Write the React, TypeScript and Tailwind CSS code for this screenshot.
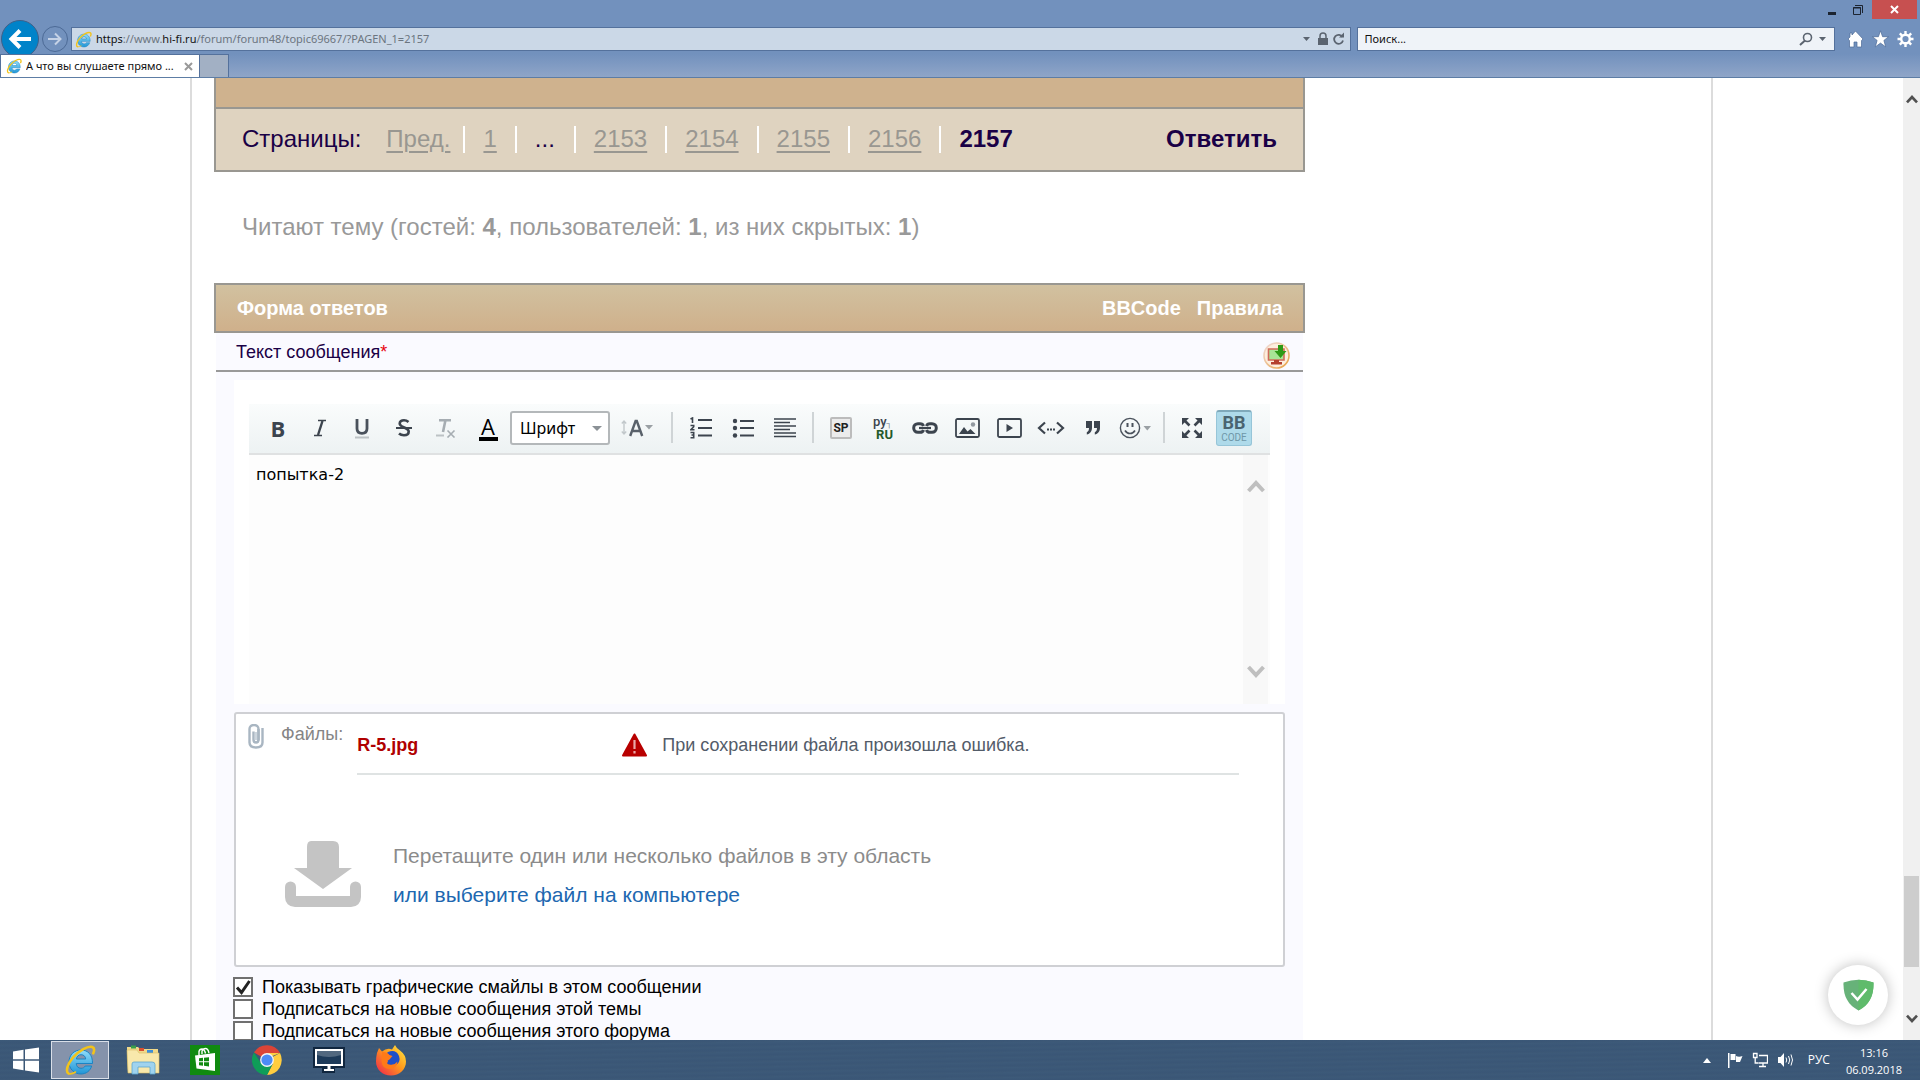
import React from "react";
import type { ReactNode } from "react";

const pages = ["2153", "2154", "2155", "2156"];

function IELogo({ className }: { className: string }) {
  return (
    <svg className={className} viewBox="0 0 32 32" aria-hidden="true">
      <defs>
        <linearGradient id="ieBlue" x1="0" y1="0" x2="0" y2="1">
          <stop offset="0" stopColor="#8fdcfa" />
          <stop offset="1" stopColor="#2196d6" />
        </linearGradient>
      </defs>
      <path
        d="M28.500 19.500H12.200c.2 3 2 4.800 4.800 4.800 2 0 3.400-.8 4.200-2.300h6.500C26.200 26.800 22.200 30 17 30 10.200 30 5 25 5 18S10 6 17 6s11.800 5 11.500 13.500zM12.400 15h9.300c-.3-2.700-2-4.300-4.600-4.300-2.500 0-4.300 1.600-4.700 4.300z"
        fill="url(#ieBlue)"
        stroke="#1b84c4"
        strokeWidth="1"
      />
      <path
        d="M4.500 29.500C1.500 27.500 3 20.500 9 13.500S24 1.500 28.300 3c2.200 1 2.200 3.500 1 6.300"
        fill="none"
        stroke="#f2c31b"
        strokeWidth="2.600"
        strokeLinecap="round"
      />
      <path d="M4.500 29.500c2 .9 4.500 0 7-1.500" fill="none" stroke="#f2c31b" strokeWidth="1.600" strokeLinecap="round" />
    </svg>
  );
}

function BrowserChrome() {
  return (
    <header className="flex h-[78px] shrink-0 flex-col border-b border-[#5d7da5] bg-linear-to-b from-[#7291bd] from-70% to-[#8fa5c8] font-['Noto_Sans',sans-serif] text-[#111]">
      <div className="flex h-5 shrink-0 items-start justify-end pr-[3px]">
        <button aria-label="Свернуть" className="flex h-[19px] w-6 items-center justify-center">
          <svg width="10" height="12" viewBox="0 0 10 12"><path d="M1 8h8v3H1z" fill="#1c2430" /></svg>
        </button>
        <button aria-label="Восстановить" className="flex h-[19px] w-[28px] items-center justify-center">
          <svg width="12" height="12" viewBox="0 0 12 12" fill="none" stroke="#1c2430">
            <path d="M1.500 3.500h7v7h-7zM1 4h8M3 1.500h7.500V9" />
          </svg>
        </button>
        <button aria-label="Закрыть" className="flex h-[19px] w-[45px] items-center justify-center bg-[#c75050]">
          <svg width="9" height="9" viewBox="0 0 9 9"><path d="M1 1l7 7M8 1L1 8" stroke="#fff" strokeWidth="2" /></svg>
        </button>
      </div>
      <div className="flex h-[34px] shrink-0 items-center pt-1 pr-1.5">
        <button aria-label="Назад" className="z-10 ml-px flex size-[38px] shrink-0 items-center justify-center rounded-full border border-[#3f6089] bg-[#0083c9]">
          <svg width="24" height="20" viewBox="0 0 24 20" fill="none" stroke="#fff" strokeWidth="4">
            <path d="M3 10h20M12 1.500L3.500 10l8.500 8.500" />
          </svg>
        </button>
        <button aria-label="Вперёд" className="ml-[3px] flex size-[26px] shrink-0 items-center justify-center rounded-full border border-[#4c6a96]">
          <svg width="16" height="14" viewBox="0 0 16 14" fill="none" stroke="#c5d2e6" strokeWidth="2">
            <path d="M1 7h13M8 1.500L13.500 7 8 12.500" />
          </svg>
        </button>
        <div className="ml-[3px] flex h-6 min-w-0 flex-1 items-center border border-[#54719c] bg-[#cbd8e7] pr-1 pl-[3px]">
          <IELogo className="mr-1 size-[17px] shrink-0" />
          <div className="min-w-0 flex-1 truncate text-[11px] leading-5 text-[#6c7580]">
            <span className="text-[#111]">https</span>://www.<span className="text-[#111]">hi-fi.ru</span>/forum/forum48/topic69667/?PAGEN_1=2157
          </div>
          <button aria-label="Журнал адресов" className="flex w-4 justify-center">
            <svg width="7" height="4" viewBox="0 0 7 4"><path d="M0 0h7L3.500 4z" fill="#5b6470" /></svg>
          </button>
          <svg width="16" height="16" viewBox="0 0 16 16" aria-hidden="true">
            <path d="M3 7h10v7H3z" fill="#5b6470" />
            <path d="M5 7V5a3 3 0 0 1 6 0v2" fill="none" stroke="#5b6470" strokeWidth="1.500" />
          </svg>
          <button aria-label="Обновить">
            <svg width="15" height="15" viewBox="0 0 15 15">
              <path d="M11.500 5A4.500 4.500 0 1 0 12 8.500" fill="none" stroke="#5b6470" strokeWidth="1.800" />
              <path d="M8 5.500h5v-5z" fill="#5b6470" />
            </svg>
          </button>
        </div>
        <div className="ml-1.5 flex h-6 w-1/4 items-center border border-[#54719c] bg-[#eff3f8] pr-2 pl-[7px]">
          <input aria-label="Поиск" placeholder="Поиск..." className="min-w-0 flex-1 bg-transparent text-[11px] leading-5 outline-none placeholder:text-[#111]" />
          <button aria-label="Найти" className="flex items-center gap-1.5">
            <svg width="14" height="14" viewBox="0 0 14 14" fill="none" stroke="#5b6470">
              <circle cx="8.500" cy="5.500" r="4" strokeWidth="1.600" />
              <path d="M6 8.500L1 13" strokeWidth="2" />
            </svg>
            <svg width="7" height="4" viewBox="0 0 7 4"><path d="M0 0h7L3.500 4z" fill="#5b6470" /></svg>
          </button>
        </div>
        <div className="ml-3 flex shrink-0 gap-2">
          <button aria-label="Домой">
            <svg width="17" height="18" viewBox="0 0 17 18">
              <path d="M8.500 1L16 9l-1.500 1.500V17H10v-5H7v5H2.500v-6.500L1 9l2-2V3h2v2z" fill="#fff" stroke="#4c6a96" strokeWidth=".7" />
            </svg>
          </button>
          <button aria-label="Избранное">
            <svg width="17" height="18" viewBox="0 0 17 18">
              <path d="M8.500.8l2.100 5.900h6L11.900 10.400l1.800 6.500-5.200-3.800-5.200 3.800 1.800-6.500L.4 6.700h6z" fill="#fff" stroke="#4c6a96" strokeWidth=".7" />
            </svg>
          </button>
          <button aria-label="Сервис">
            <svg width="17" height="18" viewBox="0 0 17 18" fill="none" stroke="#fff">
              <circle cx="8.500" cy="9" r="4.300" strokeWidth="2.400" />
              <path d="M8.500 4.500v-3.500M8.500 13.500v3.500M4 9H.5M13 9h3.500M5.300 5.800L2.800 3.300M11.700 12.200l2.500 2.500M5.300 12.200l-2.500 2.500M11.700 5.800l2.500-2.500" strokeWidth="2.400" />
            </svg>
          </button>
        </div>
      </div>
      <div className="z-10 flex h-[23px] items-stretch" role="tablist">
        <div role="tab" aria-selected="true" className="flex w-[200px] items-center border border-b-0 border-[#54719c] bg-white pr-1.5 pl-[5px]">
          <IELogo className="mr-1 size-4 shrink-0" />
          <span className="flex-1 truncate text-[11px] leading-4">А что вы слушаете прямо ...</span>
          <button aria-label="Закрыть вкладку" className="ml-0.5">
            <svg width="9" height="9" viewBox="0 0 9 9"><path d="M1 1l7 7M8 1L1 8" stroke="#999" strokeWidth="2" /></svg>
          </button>
        </div>
        <button aria-label="Новая вкладка" className="w-[29px] border-t border-r border-[#54719c] bg-[#a2b0c4]" />
      </div>
    </header>
  );
}

function Divider({ className = "" }: { className?: string }) {
  return <span className={`h-[27px] w-0.5 bg-white ${className}`} />;
}

function Pagination() {
  return (
    <nav aria-label="Страницы" className="border-2 border-t-0 border-[#999791]">
      <div className="h-[29px] bg-[#cfb28e]" />
      <div className="flex items-center border-t-2 border-[#999791] bg-[#dfd3c0] pt-[15px] pr-[26px] pb-[16px] pl-[26px] text-2xl leading-[30px] text-[#1a0046]">
        <span className="mr-[25px]">Страницы:</span>
        <a href="#prev" className="text-[#999791] underline decoration-2 underline-offset-4">Пред.</a>
        <Divider className="mr-[18px] ml-[13px]" />
        <a href="#p1" className="text-[#999791] underline decoration-2 underline-offset-4">1</a>
        <Divider className="mx-[18px]" />
        <span>...</span>
        <Divider className="mr-[18px] ml-[19px]" />
        {pages.map((p) => (
          <React.Fragment key={p}>
            <a href={"#p" + p} className="text-[#999791] underline decoration-2 underline-offset-4">{p}</a>
            <Divider className="mx-[18px]" />
          </React.Fragment>
        ))}
        <b>2157</b>
        <a href="#reply" className="ml-auto font-bold">Ответить</a>
      </div>
    </nav>
  );
}

function Tool({ label, children, className = "w-[42px]" }: { label: string; children: ReactNode; className?: string }) {
  return (
    <button type="button" aria-label={label} title={label} className={`flex h-9 shrink-0 items-center justify-center text-[#3c444e] ${className}`}>
      {children}
    </button>
  );
}

function ToolSeparator({ className = "w-4" }: { className?: string }) {
  return (
    <span className={`flex shrink-0 justify-center ${className}`}>
      <span className="h-[31px] w-0.5 bg-[#cfd4d6]" />
    </span>
  );
}

function Toolbar() {
  return (
    <div role="toolbar" aria-label="Форматирование" className="flex h-[51px] items-center overflow-hidden border-b-2 border-[#dfe1e2] bg-linear-to-b from-[#fafcfc] to-[#edf2f3] pb-0.5 pl-2">
      <Tool label="Полужирный">
        <span className="font-['Open_Sans',sans-serif] text-[22px] leading-6 font-bold">B</span>
      </Tool>
      <Tool label="Курсив">
        <svg width="14" height="18" viewBox="0 0 14 18" fill="none" stroke="#3c444e">
          <path d="M5 1.500h8M1 16.500h8" strokeWidth="1.500" />
          <path d="M9.500 2L5 16" strokeWidth="2.400" />
        </svg>
      </Tool>
      <Tool label="Подчёркнутый">
        <svg width="16" height="22" viewBox="0 0 16 22" fill="none">
          <path d="M3 2v9.500c0 3 1.800 4.800 5 4.800s5-1.800 5-4.800V2" stroke="#4a525c" strokeWidth="2.800" />
          <path d="M1 20.500h14" stroke="#bcc2c5" strokeWidth="2" />
        </svg>
      </Tool>
      <Tool label="Зачёркнутый">
        <svg width="16" height="20" viewBox="0 0 16 20" fill="none" stroke="#3c444e" strokeWidth="2.600">
          <path d="M12.500 4C11 2.700 9.500 2.200 8 2.200c-2.600 0-4.300 1.300-4.300 3.300 0 4.500 9 3.500 9 8 0 2.200-1.800 3.800-4.700 3.800-2 0-3.800-.7-5-1.800" />
          <path d="M0 10h16" strokeWidth="2" />
        </svg>
      </Tool>
      <Tool label="Удалить форматирование">
        <svg width="20" height="20" viewBox="0 0 20 20" fill="none" stroke="#a6adb2">
          <path d="M3 2.200h12M9.500 2L7 14" strokeWidth="2.600" />
          <path d="M0 17.500h8" stroke="#bcc2c5" strokeWidth="2" />
          <path d="M11.500 12.500l7 7M18.500 12.500l-7 7" strokeWidth="1.600" />
        </svg>
      </Tool>
      <Tool label="Цвет текста">
        <span className="w-[19px] border-b-4 border-black font-['Open_Sans',sans-serif] text-[22px] leading-[22px] text-black">A</span>
      </Tool>
      <span className="relative ml-px shrink-0">
        <select aria-label="Шрифт" className="h-[34px] w-[100px] appearance-none rounded-[3px] border-2 border-[#b4b8ba] bg-white pl-2 font-['Noto_Sans',sans-serif] text-base text-black">
          <option>Шрифт</option>
        </select>
        <svg className="pointer-events-none absolute top-[15px] right-2" width="10" height="5" viewBox="0 0 10 5"><path d="M0 0h10L5 5z" fill="#8b9196" /></svg>
      </span>
      <Tool label="Размер шрифта" className="w-[54px]">
        <svg width="32" height="20" viewBox="0 0 32 20" fill="none">
          <path d="M3 4v12M.8 5.500L3 3l2.200 2.500M.8 13.500L3 16l2.200-2.500" stroke="#c2c8cb" strokeWidth="1.400" />
          <path d="M9.200 18l5.400-15h1.200l5.400 15M11 13h8.500" stroke="#59616a" strokeWidth="2.400" />
          <path d="M24 7h8l-4 4.500z" fill="#9aa0a4" />
        </svg>
      </Tool>
      <ToolSeparator />
      <Tool label="Нумерованный список">
        <svg width="22" height="22" viewBox="0 0 22 22" fill="none" stroke="#3c444e" strokeWidth="1.600">
          <path d="M8 3h14M8 11h14M8 18.500h14" strokeWidth="1.800" />
          <path d="M.5 2L2.500 1v5M.5 8.500h3.200v1.200L1 12.700h3.500M.5 15.500h3.200v5.300H.5M1.500 18h2" />
        </svg>
      </Tool>
      <Tool label="Маркированный список">
        <svg width="22" height="20" viewBox="0 0 22 20">
          <path d="M8 3h14M8 10h14M8 17.500h14" stroke="#3c444e" strokeWidth="1.800" />
          <g fill="#3c444e"><circle cx="3" cy="3" r="2.200" /><circle cx="3" cy="10" r="2.200" /><circle cx="3" cy="17.500" r="2.200" /></g>
        </svg>
      </Tool>
      <Tool label="Выравнивание">
        <svg width="22" height="20" viewBox="0 0 22 20">
          <path d="M0 1h22M0 4.500h16M0 8h22M0 11.500h16M0 15h22M0 18.500h22" stroke="#3c444e" strokeWidth="1.700" />
        </svg>
      </Tool>
      <ToolSeparator className="w-3.5" />
      <Tool label="Спойлер">
        <span className="flex size-[22px] items-center justify-center rounded-[2px] border-2 border-[#bcbcbc] bg-[#ececec] font-['Roboto',sans-serif] text-xs leading-none font-bold text-[#222]">SP</span>
      </Tool>
      <Tool label="Транслит">
        <span className="flex w-5 flex-col font-['Roboto',sans-serif] text-[13px] leading-[11px]">
          <span className="text-left font-medium">ру<span className="text-[8px] text-gray-500">┐</span></span>
          <span className="text-right font-bold text-[#235a2b]">RU</span>
        </span>
      </Tool>
      <Tool label="Ссылка">
        <svg width="26" height="12" viewBox="0 0 26 12" fill="none" stroke="#3c444e" strokeWidth="3">
          <path d="M11.500 4C11 2.300 9.500 1.700 8 1.700H6C3.500 1.700 1.700 3.500 1.700 6S3.500 10.300 6 10.300h2c1.500 0 3-.6 3.500-2.300M14.500 4c.5-1.700 2-2.300 3.500-2.300h2c2.500 0 4.300 1.800 4.300 4.300s-1.800 4.300-4.300 4.300h-2c-1.500 0-3-.6-3.500-2.300" />
          <path d="M7 6h12" strokeWidth="2.200" />
        </svg>
      </Tool>
      <Tool label="Изображение">
        <svg width="25" height="20" viewBox="0 0 25 20">
          <rect x="1" y="1" width="23" height="18" rx="1.500" fill="none" stroke="#3c444e" strokeWidth="1.800" />
          <path d="M4 16l5-7 3.500 4.500L15.500 11l5 5z" fill="#3c444e" />
          <circle cx="18" cy="6.500" r="2.200" fill="#9299a0" />
        </svg>
      </Tool>
      <Tool label="Видео">
        <svg width="25" height="20" viewBox="0 0 25 20">
          <rect x="1" y="1" width="23" height="18" rx="1.500" fill="none" stroke="#3c444e" strokeWidth="1.800" />
          <path d="M9.500 6v8l6.500-4z" fill="#3c444e" />
        </svg>
      </Tool>
      <Tool label="Код">
        <svg width="28" height="14" viewBox="0 0 28 14" fill="none" stroke="#3c444e">
          <path d="M8 1.500L2 7l6 5.500M20 1.500L26 7l-6 5.500" strokeWidth="2.200" />
          <path d="M10 8.500h2M13 8.500h2M16 8.500h2" strokeWidth="2.200" />
        </svg>
      </Tool>
      <Tool label="Цитата">
        <svg width="14" height="15" viewBox="0 0 14 15" fill="#3c444e">
          <path d="M0 1h6v6.500C6 11.500 4 14 .8 14.500v-2.300C2.300 11.500 3 10.300 3 8H0zM8 1h6v6.500c0 4-2 6.500-5.200 7v-2.300c1.500-.7 2.200-1.900 2.200-4.200H8z" />
        </svg>
      </Tool>
      <Tool label="Смайлы">
        <svg width="32" height="22" viewBox="0 0 32 22" fill="none" stroke="#4a525c">
          <circle cx="11" cy="11" r="9.600" strokeWidth="1.400" />
          <path d="M8.500 6v4M13.500 6v4" strokeWidth="2" />
          <path d="M6 13.500c1.300 2 3 3 5 3s3.700-1 5-3" strokeWidth="1.700" />
          <path d="M24.500 9h7.500l-3.700 4.500z" fill="#9aa0a4" stroke="none" />
        </svg>
      </Tool>
      <ToolSeparator />
      <Tool label="Во весь экран" className="w-10">
        <svg width="20" height="20" viewBox="0 0 20 20">
          <path d="M0 0h7L0 7zM20 0v7l-7-7zM0 20v-7l7 7zM20 20h-7l7-7z" fill="#3c444e" />
          <path d="M2 2l5.500 5.500M18 2l-5.500 5.500M2 18l5.500-5.500M18 18l-5.500-5.500" stroke="#3c444e" strokeWidth="2.600" />
        </svg>
      </Tool>
      <button type="button" className="ml-1 flex size-9 shrink-0 flex-col items-center rounded-[3px] border border-t-2 border-[#96c5d8] border-t-[#7fa9ba] bg-[#aedaea] pt-0.5 font-['Roboto',sans-serif] text-[#4a6470]">
        <span className="text-lg leading-[18px] font-bold">BB</span>
        <span className="text-[10px] leading-[11px] text-[#6f97a8]">CODE</span>
      </button>
    </div>
  );
}

function Chevron({ up = false, className }: { up?: boolean; className: string }) {
  return (
    <svg className={className} viewBox="0 0 18 14" fill="none" stroke="currentColor" strokeWidth="4" aria-hidden="true">
      <path d={up ? "M1.500 12L9 4l7.500 8" : "M1.500 2L9 10l7.500-8"} />
    </svg>
  );
}

function Check({ id, label, checked = false }: { id: string; label: string; checked?: boolean }) {
  return (
    <div className="flex h-[22px] items-center">
      <span className="relative mr-[9px] size-5 shrink-0">
        <input id={id} type="checkbox" defaultChecked={checked} className="peer block size-5 appearance-none border-2 border-[#707070] bg-white" />
        <svg className="pointer-events-none absolute inset-0 hidden peer-checked:block" viewBox="0 0 20 20">
          <path d="M4 10.500l4.500 5L16.500 4" fill="none" stroke="#222" strokeWidth="3" />
        </svg>
      </span>
      <label htmlFor={id} className="text-lg leading-[22px] whitespace-nowrap text-black">{label}</label>
    </div>
  );
}

function ReplyForm() {
  return (
    <section>
      <div className="flex h-[50px] items-center justify-between border-2 border-[#999791] bg-linear-to-b from-[#d1c1a0] to-[#cfb08b] pr-5 pl-[21px] text-xl leading-6 font-bold text-white">
        <h2>Форма ответов</h2>
        <div className="flex gap-4">
          <a href="#bbcode">BBCode</a>
          <a href="#rules">Правила</a>
        </div>
      </div>
      <form className="mx-0.5 bg-[#fafaff]">
        <div className="flex h-[39px] items-end justify-between border-b-2 border-[#999] pr-[13px] pl-5">
          <label htmlFor="message" className="pb-2 text-lg leading-5 text-[#1a0046]">
            Текст сообщения<span className="text-red-600">*</span>
          </label>
          <button type="button" aria-label="Сохранить">
            <svg width="27" height="28" viewBox="0 0 27 28">
              <defs>
                <linearGradient id="saveRing" x1="0" y1="0" x2="1" y2="1">
                  <stop offset="0" stopColor="#f0dede" />
                  <stop offset="1" stopColor="#e8a040" />
                </linearGradient>
              </defs>
              <circle cx="13.500" cy="13.500" r="12.500" fill="#fdeedd" stroke="url(#saveRing)" strokeWidth="1.600" />
              <path d="M5.500 7h15.500v11H5.500z" fill="#a9e596" stroke="#d06a5a" strokeWidth="1.600" />
              <path d="M11 18h5v2h3v2.500H8V20h3z" fill="#b4402e" />
              <path d="M15 3h5v6h3.500L17.500 16l-6-7H15z" fill="#2f9a16" />
            </svg>
          </button>
        </div>
        <div className="mt-2 px-[18px]">
          <div className="bg-white px-[15px] pt-6">
            <Toolbar />
            <div className="flex h-[249px] bg-[#fdfdfd] pr-0.5">
              <textarea id="message" defaultValue="попытка-2" className="min-w-0 flex-1 resize-none overflow-hidden px-[7px] pt-2 font-['DejaVu_Sans',sans-serif] text-base leading-6 text-black outline-none" />
              <div className="flex w-[25px] flex-col items-center justify-between bg-[#f8f8f8] pt-6 pb-[25px] text-[#bfbfbf]">
                <Chevron up className="h-3.5 w-[18px]" />
                <Chevron className="h-3.5 w-[18px]" />
              </div>
            </div>
          </div>
          <div className="mt-2 h-[255px] rounded-[3px] border-2 border-[#cfd0d4] bg-white text-lg leading-5">
            <div className="flex pt-2.5 pl-3">
              <svg className="shrink-0" width="16" height="25" viewBox="0 0 16 25" fill="none" stroke="#a9b6c2">
                <path d="M14.500 4v14.500c0 3-2.500 5-6.500 5s-6.500-2-6.500-5V5c0-2.500 1.700-4 4.500-4s4.500 1.500 4.500 4v11.500" strokeWidth="2.400" />
                <path d="M10.500 5v10.500c0 2-1 3-2.500 3s-2.500-1-2.500-3V7.500" strokeWidth="2.400" />
                <path d="M8 8v8" stroke="#cdd6de" strokeWidth="2" />
              </svg>
              <span className="ml-[17px] text-[#858585]">Файлы:</span>
              <div className="mr-[44px] ml-3.5 flex h-[51px] flex-1 items-center border-b-2 border-[#dfe3e3] pb-[7px]">
                <b className="w-[265px] leading-[22px] text-[#b00000]">R-5.jpg</b>
                <svg className="mr-[15px] shrink-0" width="25" height="24" viewBox="0 0 25 24">
                  <path d="M12.500 1.500L24 22.500H1z" fill="#b80000" stroke="#b80000" strokeWidth="2" strokeLinejoin="round" />
                  <path d="M12.500 7v9M12.500 18v2.500" stroke="#e9a9a9" strokeWidth="2.200" />
                </svg>
                <span className="text-[#535c69]">При сохранении файла произошла ошибка.</span>
              </div>
            </div>
            <div className="mt-[65px] flex items-center pl-[49px]">
              <svg className="shrink-0" width="76" height="68" viewBox="0 0 76 68" fill="#c4c4c4">
                <path d="M26 1h22q6 0 6 6v21h13L38 49 9 28h13V7q0-6 4-6z" />
                <path d="M5.500 47v10c0 3 1.500 4.500 4.500 4.500h56c3 0 4.500-1.500 4.500-4.500V47" fill="none" stroke="#c4c4c4" strokeWidth="11" strokeLinecap="round" strokeLinejoin="round" />
              </svg>
              <div className="ml-8 flex flex-col items-start gap-[15px] pt-0.5 text-[21px] leading-6">
                <span className="text-[#8b8b8b]">Перетащите один или несколько файлов в эту область</span>
                <button type="button" className="text-[#2067b0]">или выберите файл на компьютере</button>
              </div>
            </div>
          </div>
        </div>
        <div className="pt-[9px] pb-8 pl-[17px]">
          <Check id="smiles" label="Показывать графические смайлы в этом сообщении" checked />
          <Check id="topic" label="Подписаться на новые сообщения этой темы" />
          <Check id="forum" label="Подписаться на новые сообщения этого форума" />
        </div>
      </form>
    </section>
  );
}

function TaskButton({ label, children }: { label: string; children: ReactNode }) {
  return <button aria-label={label} className="flex h-10 w-[62px] items-center justify-center">{children}</button>;
}

function Taskbar() {
  return (
    <footer className="flex h-10 shrink-0 items-center justify-between bg-[#3b5877] bg-[repeating-linear-gradient(179deg,#3d5a79_0px,#3a5676_3px,#3d5977_5px)] font-['Open_Sans','Noto_Sans',sans-serif] text-xs text-white">
      <div className="flex items-center">
        <button aria-label="Пуск" className="flex h-10 w-[51px] items-center justify-center">
          <svg width="28" height="26" viewBox="0 0 28 26" fill="#fff">
            <path d="M1 4.500l10.500-1.700v9.500H1zM13 2.500L27 .5v11.800H13zM1 13.700h10.500v9.500L1 21.500zM13 13.700h14v11.800l-14-2z" />
          </svg>
        </button>
        <button aria-label="Internet Explorer" className="mr-[3px] flex h-[38px] w-[58px] items-center justify-center border border-[#d9dfe8] bg-[#8593ab]">
          <IELogo className="size-8" />
        </button>
        <TaskButton label="Проводник">
          <svg width="34" height="32" viewBox="0 0 34 32">
            <path d="M1 6V3h11l2 2h18v24H2z" fill="#f0d98a" />
            <path d="M5 1.500h5v3H5z" fill="#39a04a" /><path d="M13 4h5v3h-5z" fill="#d9502f" /><path d="M21 6h6v3h-6z" fill="#3d8fd8" />
            <path d="M1 6h10l2 3h20v20H2z" fill="#f8e8ab" stroke="#d9bd66" strokeWidth=".6" />
            <path d="M6 30V20q0-2 2-2h18q3 0 3 2.500V30h-5v-7H12v7z" fill="#9fd3ee" stroke="#5aa6cf" strokeWidth=".8" />
          </svg>
        </TaskButton>
        <TaskButton label="Магазин">
          <svg width="30" height="30" viewBox="0 0 30 30">
            <path d="M0 0h30v30H0z" fill="#108a10" />
            <path d="M5 10.500L25 8v18L6.500 23.500z" fill="#fff" />
            <path d="M9 10V6.500Q9.500 4 12 4t3.500 4.500M12 9V6q1-2.500 3.500-2.500T19 8" fill="none" stroke="#fff" strokeWidth="1.400" />
            <path d="M9 13.200l4-.4v3.500H9zM14 12.700l5-.5v4.100h-5zM9 17.200h4v3.500l-4-.5zM14 17.200h5v4.300l-5-.7z" fill="#108a10" />
          </svg>
        </TaskButton>
        <TaskButton label="Chrome">
          <svg width="30" height="30" viewBox="0 0 30 30">
            <path d="M15 15L2 7.500A15 15 0 0 1 28 8H15z" fill="#db4437" />
            <path d="M15 15l13-7a15 15 0 0 1-13 22l6-11.500z" fill="#ffcd40" />
            <path d="M15 15l5.500 4L15 30A15 15 0 0 1 2 7.500L9 18z" fill="#0f9d58" />
            <path d="M15 8h13l-7.500 3z" fill="#ffcd40" />
            <circle cx="15" cy="15" r="6.900" fill="#f5f5f5" /><circle cx="15" cy="15" r="5.600" fill="#4c8bf5" />
          </svg>
        </TaskButton>
        <TaskButton label="Компьютер">
          <svg width="32" height="26" viewBox="0 0 32 26">
            <path d="M0 0h32v21H22v5H9v-5H0z" fill="#10263f" />
            <path d="M3 3h26v15H3z" fill="#1d3a59" stroke="#fff" strokeWidth="2" />
            <path d="M4 4h24v4q-12 4-24 0z" fill="#52687f" />
            <path d="M14.500 19h3v3h3.500v2H11v-2h3.500z" fill="#fff" />
          </svg>
        </TaskButton>
        <TaskButton label="Firefox">
          <svg width="32" height="32" viewBox="0 0 32 32">
            <defs>
              <linearGradient id="fox" x1="1" y1="0" x2="0" y2="1">
                <stop offset="0" stopColor="#fff044" /><stop offset=".45" stopColor="#ff9a1c" /><stop offset="1" stopColor="#ee1c50" />
              </linearGradient>
            </defs>
            <path d="M2 9l2-5 3 3.500Q12 3.500 17 5.500L20 1q1.500 3.500 5 5.500 6 4.500 6 11C31 25.500 24.500 31.500 16 31.500S1 25.500 1 17.500q0-4.500 1-8.500z" fill="url(#fox)" />
            <path d="M13 8q8-3 11 4 2 6-3 9t-10 0l2-3.500-3-3q0-4 3-6.500z" fill="#1f50c8" />
            <path d="M7 8q5-.5 7.500 3l3 1-3 3.500q-2.500 1-3 3 1.500 3 6 2 3-.5 5-3-1 7.500-7.500 7.500Q7 25 6.500 17z" fill="#ff7a18" />
          </svg>
        </TaskButton>
      </div>
      <div className="flex items-center pr-[18px]">
        <button aria-label="Скрытые значки" className="mr-4">
          <svg width="8" height="5" viewBox="0 0 8 5"><path d="M4 0l4 5H0z" fill="#fff" /></svg>
        </button>
        <svg className="mr-[9px]" width="16" height="16" viewBox="0 0 16 16" fill="#fff" aria-hidden="true">
          <path d="M1 1h1.500v15H1zM3.500 2h5v6h-5zM9 4q3 1.500 6.500 0L13 10H9z" />
        </svg>
        <svg className="mr-[9px]" width="16" height="16" viewBox="0 0 16 16" fill="none" stroke="#fff" aria-hidden="true">
          <path d="M7 3.500h8.500v7.500h-9M11 11v3M7 14.500h7M1.500 1.500h3.500v4H1.500zM3.200 5.500V11h3" strokeWidth="1.300" />
        </svg>
        <svg className="mr-[15px]" width="16" height="16" viewBox="0 0 16 16" aria-hidden="true">
          <path d="M1 5h2.500L7 1v14l-3.500-4H1z" fill="#fff" />
          <path d="M9 5.500q1.500 2.500 0 5M11.500 4q2.500 4 0 8M14 2.500q3 5.500 0 11" fill="none" stroke="#fff" />
        </svg>
        <span className="mr-4">РУС</span>
        <time className="pt-0.5 text-center text-[11px] leading-[17px]">13:16<br />06.09.2018</time>
      </div>
    </footer>
  );
}

export default function App() {
  return (
    <div className="flex h-screen flex-col overflow-hidden bg-white font-['Liberation_Sans',Arial,sans-serif]">
      <BrowserChrome />
      <div className="relative flex min-h-0 flex-1">
        <main className="min-w-0 flex-1 overflow-hidden px-[190px]">
          <div className="min-h-full border-x-2 border-[#dcdcdc] pl-[22px]">
            <div className="w-[72%] min-w-[1091px]">
              <Pagination />
              <p className="pt-10 pb-[41px] pl-7 text-2xl leading-[30px] text-[#999]">
                Читают тему (гостей: <b>4</b>, пользователей: <b>1</b>, из них скрытых: <b>1</b>)
              </p>
              <ReplyForm />
            </div>
          </div>
        </main>
        <div className="flex w-[17px] shrink-0 flex-col items-center bg-[#f0f0f0] pt-4 pb-4 text-[#505050]" aria-hidden="true">
          <Chevron up className="h-2.5 w-3" />
          <div className="mt-auto mb-[47px] h-[91px] w-[15px] bg-[#cdcdcd]" />
          <Chevron className="h-2.5 w-3" />
        </div>
        <button aria-label="Защита" className="absolute right-8 bottom-[15px] flex size-[60px] items-center justify-center rounded-full bg-white shadow-[0_0_14px_rgba(0,0,0,0.25)]">
          <svg width="31" height="32" viewBox="0 0 31 32">
            <path d="M.5 3.500Q15.500-2 30.500 3.500C31 17 26 26 15.500 31.500 5 26 0 17 .5 3.500z" fill="#67b279" />
            <path d="M15.500.8Q23 .8 30.500 3.500C31 17 26 26 15.500 31.500z" fill="#5fbb6b" />
            <path d="M8.500 14l6 6.500L23.500 10" fill="none" stroke="#fff" strokeWidth="2.500" />
          </svg>
        </button>
      </div>
      <Taskbar />
    </div>
  );
}
